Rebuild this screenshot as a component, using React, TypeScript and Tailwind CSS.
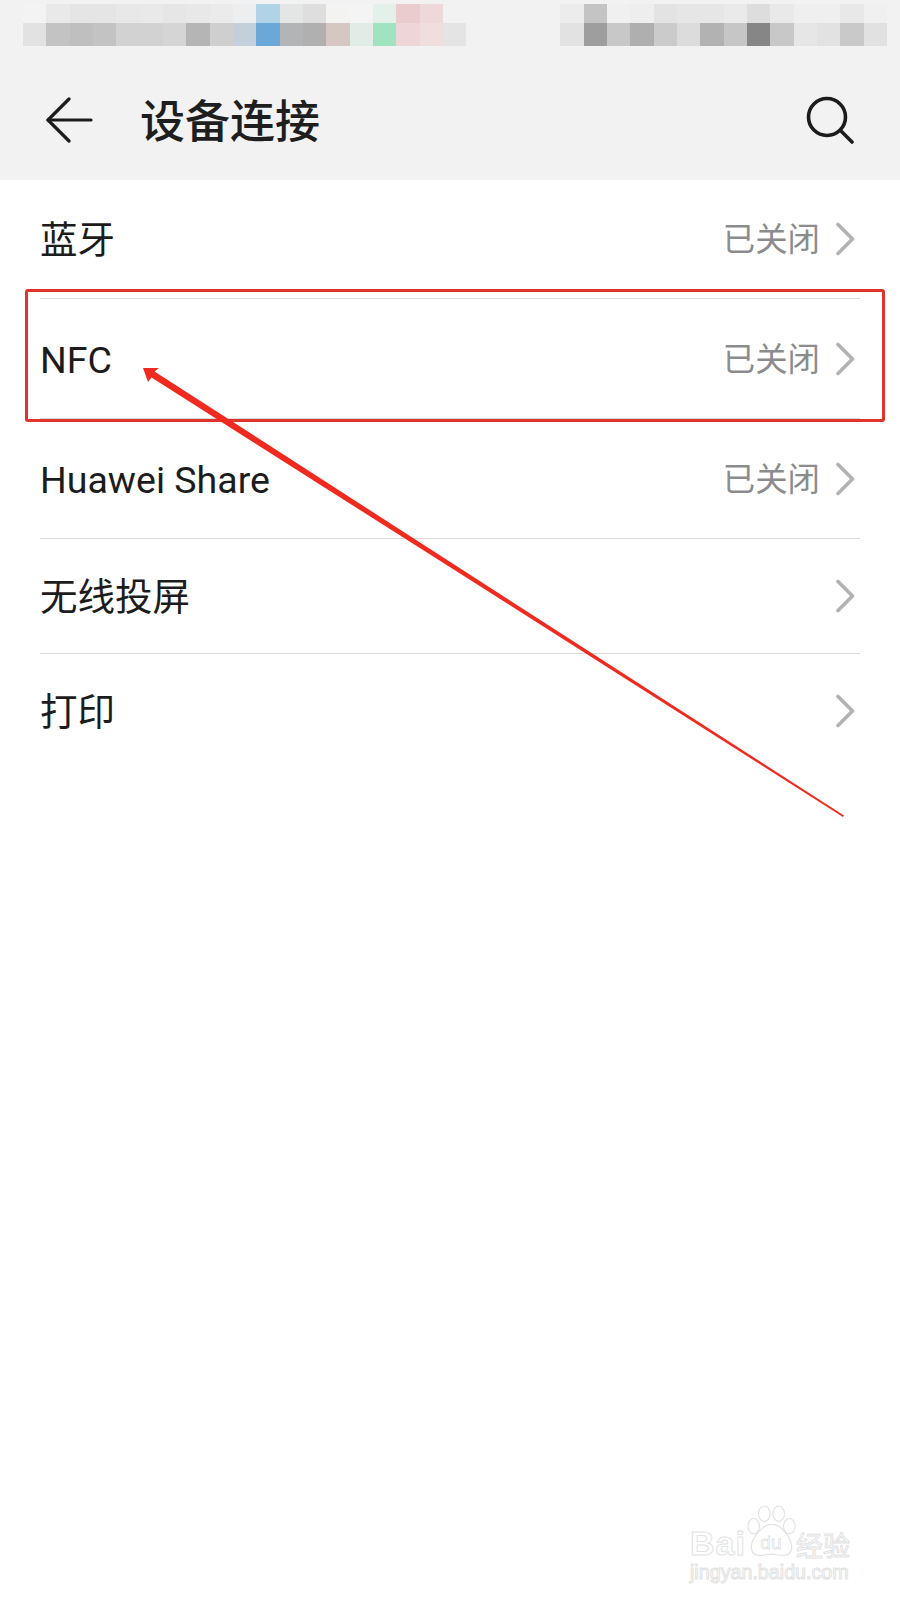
const topLeft = [
  ["bg-[#f3f3f3]", "bg-[#e2e2e2]"],
  ["bg-[#e9e9e9]", "bg-[#c3c3c3]"],
  ["bg-[#e5e5e5]", "bg-[#bfbfbf]"],
  ["bg-[#e5e5e5]", "bg-[#c3c3c3]"],
  ["bg-[#e8e8e8]", "bg-[#d2d2d2]"],
  ["bg-[#e9e9e9]", "bg-[#d2d2d2]"],
  ["bg-[#e6e6e6]", "bg-[#d5d5d5]"],
  ["bg-[#e8e8e8]", "bg-[#b5b5b5]"],
  ["bg-[#ebebeb]", "bg-[#cfcfcf]"],
  ["bg-[#eceeef]", "bg-[#c3cfda]"],
  ["bg-[#b0d3e8]", "bg-[#6ba8d8]"],
  ["bg-[#e4e5e5]", "bg-[#b2b4b5]"],
  ["bg-[#dedede]", "bg-[#b0b0b0]"],
  ["bg-[#f3f3f1]", "bg-[#d6c7c5]"],
  ["bg-[#f3f4f3]", "bg-[#e2ece6]"],
  ["bg-[#e4f1ea]", "bg-[#a0e3c0]"],
  ["bg-[#eacccf]", "bg-[#eed6d8]"],
  ["bg-[#eed8da]", "bg-[#f0dedf]"],
  ["bg-[#f2f2f2]", "bg-[#e4e4e4]"],
];

const topRight = [
  ["bg-[#ececec]", "bg-[#e2e2e2]"],
  ["bg-[#c4c4c4]", "bg-[#9e9e9e]"],
  ["bg-[#f0f0f0]", "bg-[#c8c8c8]"],
  ["bg-[#eeeeee]", "bg-[#afafaf]"],
  ["bg-[#e3e3e3]", "bg-[#cbcbcb]"],
  ["bg-[#e6e6e6]", "bg-[#dcdcdc]"],
  ["bg-[#e6e6e6]", "bg-[#b2b2b2]"],
  ["bg-[#eaeaea]", "bg-[#c6c6c6]"],
  ["bg-[#dddddd]", "bg-[#868686]"],
  ["bg-[#e9e9e9]", "bg-[#c8c8c8]"],
  ["bg-[#efefef]", "bg-[#e6e6e6]"],
  ["bg-[#efefef]", "bg-[#e2e2e2]"],
  ["bg-[#e8e8e8]", "bg-[#c9c9c9]"],
  ["bg-[#f0f0f0]", "bg-[#e1e1e1]"],
];

const rows = [
  { label: "蓝牙", status: "已关闭", height: "h-[119px]" },
  { label: "NFC", status: "已关闭", height: "h-[120px]" },
  { label: "Huawei Share", status: "已关闭", height: "h-[120px]" },
  { label: "无线投屏", height: "h-[115px]" },
  { label: "打印", height: "h-[114px]", last: true },
];

function Blurred({ cols }: { cols: string[][] }) {
  return (
    <div className="flex">
      {cols.map((c, i) => (
        <div key={i} className="w-[23.33px]">
          <div className={`h-[19px] ${c[0]}`} />
          <div className={`h-[23px] ${c[1]}`} />
        </div>
      ))}
    </div>
  );
}

function Chevron() {
  return (
    <svg width="20" height="34" viewBox="0 0 20 34" fill="none" className="ml-[15px]">
      <path d="M3 2.5 L17.5 17 L3 31.5" stroke="#b2b2b2" strokeWidth="3.6" strokeLinecap="round" strokeLinejoin="round" />
    </svg>
  );
}

function Watermark() {
  const outline = "text-transparent [-webkit-text-stroke:1px_#e2e2e2] font-['Liberation_Sans',sans-serif]";
  return (
    <div className="absolute left-[690px] top-[1500px] w-[170px]">
      <div className="flex items-end h-[60px]">
        <span className={`${outline} text-[34px] leading-[34px] font-bold tracking-[1px]`}>Bai</span>
        <svg width="50" height="56" viewBox="0 0 52 56" fill="none" stroke="#e2e2e2" strokeWidth="1.2">
          <ellipse cx="8" cy="22" rx="6" ry="8" />
          <ellipse cx="19" cy="9" rx="6" ry="8" />
          <ellipse cx="34" cy="9" rx="6" ry="8" />
          <ellipse cx="45" cy="22" rx="6" ry="8" />
          <path d="M27 20 C38 20 50 38 47 47 C44 56 33 51 27 51 C20 51 9 56 6 47 C3 38 16 20 27 20 Z" />
          <text x="26" y="46" fontSize="20" textAnchor="middle" fontFamily="Liberation Sans, sans-serif" strokeWidth="0.8">du</text>
        </svg>
        <span className={`${outline} text-[27px] leading-[30px] font-['Noto_Sans_CJK_SC',sans-serif]`}>经验</span>
      </div>
      <div className={`${outline} mt-[2px] text-[19.7px] leading-[20px] [-webkit-text-stroke:0.7px_#e2e2e2]`}>jingyan.baidu.com</div>
    </div>
  );
}

export default function App() {
  return (
    <div className="relative w-[900px] h-[1600px] overflow-hidden bg-white font-['Roboto','Noto_Sans_CJK_SC',sans-serif]">
      <header className="h-[180px] bg-[#f2f2f2] pt-[4px]">
        <div className="flex gap-[94px] pl-[23px]">
          <Blurred cols={topLeft} />
          <Blurred cols={topRight} />
        </div>
        <div className="flex items-center mt-[27px] h-[94px] pl-[46px] pr-[46px]">
          <svg width="47" height="46" viewBox="0 0 47 46" fill="none" stroke="#1c1c1c" strokeWidth="3.2" strokeLinecap="round" strokeLinejoin="round">
            <path d="M23 2 L2 23 L23 44" />
            <path d="M2 23 H45" />
          </svg>
          <h1 className="ml-[47px] pt-[5px] text-[45px] leading-none font-medium text-[#1e1e1e]">设备连接</h1>
          <svg width="48" height="48" viewBox="0 0 48 48" fill="none" stroke="#1c1c1c" strokeWidth="3.6" strokeLinecap="round" className="ml-auto">
            <circle cx="21" cy="21" r="18.5" />
            <path d="M35 35 L46 46" />
          </svg>
        </div>
      </header>

      <div className="pl-[40px] pr-[40px]">
        {rows.map((row) => (
          <div
            key={row.label}
            className={`flex items-center justify-between pr-[5px] ${row.height} ${row.last ? "" : "border-b border-[#d9d9d9]"}`}
          >
            <span className="pt-[4px] text-[37.5px] leading-none text-[#1c1c1c]">{row.label}</span>
            <div className="flex items-center">
              {row.status && <span className="pt-[3px] text-[32.4px] leading-none text-[#8c8c8c]">{row.status}</span>}
              <Chevron />
            </div>
          </div>
        ))}
      </div>

      {/* annotation over the screenshot */}
      <div className="absolute left-[25px] top-[289px] w-[860px] h-[133px] rounded-[3px] border-[3px] border-[#e0332c]" />
      <svg width="900" height="1600" viewBox="0 0 900 1600" className="absolute left-0 top-0 pointer-events-none">
        <polygon points="143,368 159,368 154.5,371.5 844,815.5 843,817 151.5,377.5 148,382" fill="#f02a1e" />
      </svg>

      <Watermark />
    </div>
  );
}
